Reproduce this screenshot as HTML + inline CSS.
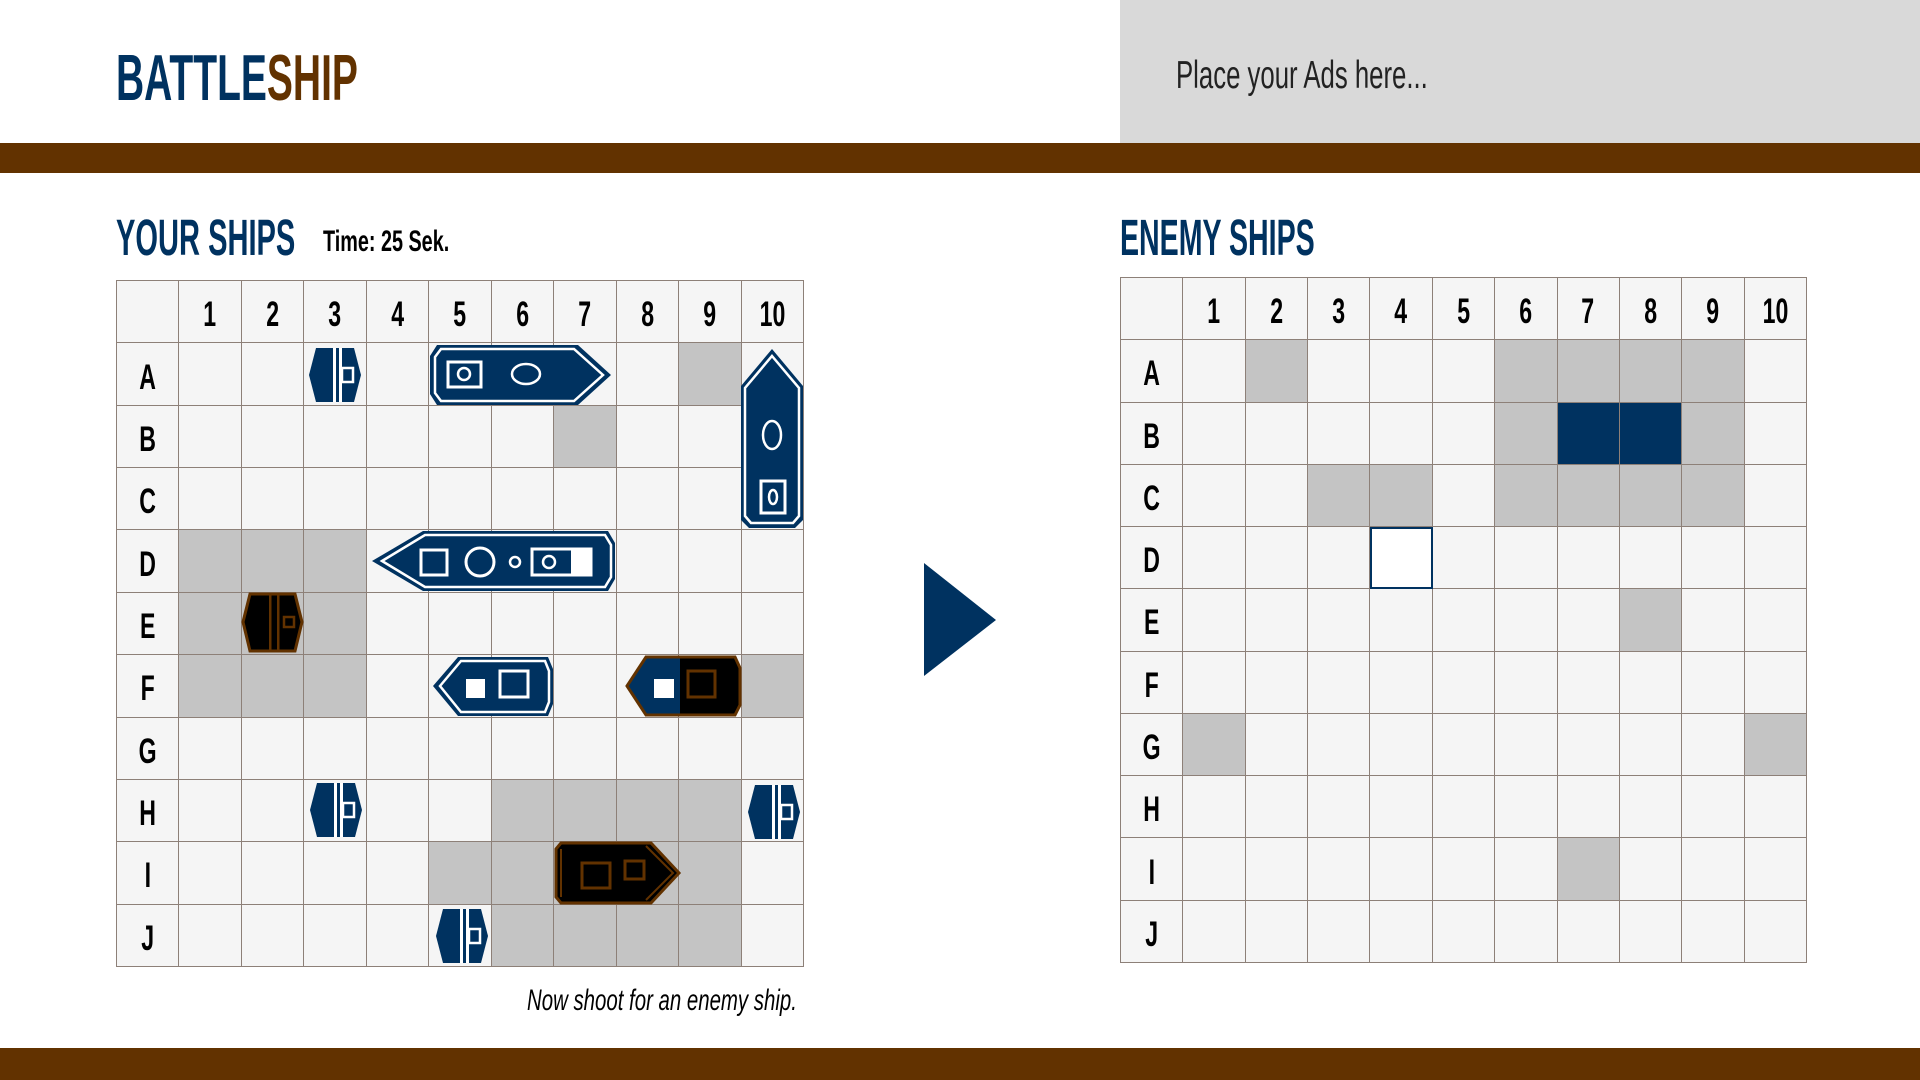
<!DOCTYPE html>
<html><head><meta charset="utf-8"><style>
*{margin:0;padding:0;box-sizing:border-box}
body{width:1920px;height:1080px;background:#fff;position:relative;overflow:hidden;font-family:"Liberation Sans",sans-serif}
.abs{position:absolute;white-space:nowrap}
.ad{left:1120px;top:0;width:800px;height:143px;background:#d9d9d9}
.bar{left:0;width:1920px;background:#623200}
.grid{position:absolute;display:grid;grid-template-columns:repeat(11,1fr);grid-template-rows:repeat(11,1fr);border-left:1px solid #8d8078;border-top:1px solid #8d8078}
.grid div{background:#f5f5f5;border-right:1px solid #8d8078;border-bottom:1px solid #8d8078;display:flex;align-items:center;justify-content:center;font-weight:bold;font-size:35px;color:#000;padding-top:7px}
.grid div span{display:inline-block;transform:scaleX(.66)}
.grid div.g{background:#c4c4c4}
.grid div.n{background:#003260}
.grid div.o{outline:2px solid #003260;outline-offset:-2px;background:#fff}
</style></head><body>
<div class="abs" style="left:116px;top:45px;font-size:65px;line-height:65px;font-weight:bold;transform:scaleX(.6);transform-origin:left;color:#003260">BATTLE<span style="color:#623200">SHIP</span></div>
<div class="abs ad"></div>
<div class="abs" style="left:1176px;top:56px;font-size:39px;line-height:39px;transform:scaleX(.66);transform-origin:left;color:#222">Place your Ads here...</div>
<div class="abs bar" style="top:143px;height:30px"></div>
<div class="abs bar" style="top:1048px;height:32px"></div>
<div class="abs" style="left:116px;top:212px;font-size:51px;line-height:51px;font-weight:bold;transform:scaleX(.57);transform-origin:left;color:#003260">YOUR SHIPS</div>
<div class="abs" style="left:323px;top:227px;font-size:30px;line-height:30px;font-weight:bold;transform:scaleX(.66);transform-origin:left;color:#000">Time: 25 Sek.</div>
<div class="abs" style="left:1120px;top:212px;font-size:51px;line-height:51px;font-weight:bold;transform:scaleX(.56);transform-origin:left;color:#003260">ENEMY SHIPS</div>
<div class="abs" style="right:1123px;top:986px;font-size:30px;line-height:30px;font-style:italic;transform:scaleX(.68);transform-origin:right;color:#000">Now shoot for an enemy ship.</div>

<div class="grid" style="left:116px;top:280px;width:688px;height:687px">
<div></div><div><span>1</span></div><div><span>2</span></div><div><span>3</span></div><div><span>4</span></div><div><span>5</span></div><div><span>6</span></div><div><span>7</span></div><div><span>8</span></div><div><span>9</span></div><div><span>10</span></div>
<div><span>A</span></div><div></div><div></div><div></div><div></div><div></div><div></div><div></div><div></div><div class="g"></div><div></div>
<div><span>B</span></div><div></div><div></div><div></div><div></div><div></div><div></div><div class="g"></div><div></div><div></div><div></div>
<div><span>C</span></div><div></div><div></div><div></div><div></div><div></div><div></div><div></div><div></div><div></div><div></div>
<div><span>D</span></div><div class="g"></div><div class="g"></div><div class="g"></div><div></div><div></div><div></div><div></div><div></div><div></div><div></div>
<div><span>E</span></div><div class="g"></div><div class="g"></div><div class="g"></div><div></div><div></div><div></div><div></div><div></div><div></div><div></div>
<div><span>F</span></div><div class="g"></div><div class="g"></div><div class="g"></div><div></div><div></div><div></div><div></div><div></div><div></div><div class="g"></div>
<div><span>G</span></div><div></div><div></div><div></div><div></div><div></div><div></div><div></div><div></div><div></div><div></div>
<div><span>H</span></div><div></div><div></div><div></div><div></div><div></div><div class="g"></div><div class="g"></div><div class="g"></div><div class="g"></div><div></div>
<div><span>I</span></div><div></div><div></div><div></div><div></div><div class="g"></div><div class="g"></div><div class="g"></div><div class="g"></div><div class="g"></div><div></div>
<div><span>J</span></div><div></div><div></div><div></div><div></div><div></div><div class="g"></div><div class="g"></div><div class="g"></div><div class="g"></div><div></div>
</div>

<div class="grid" style="left:1120px;top:277px;width:687px;height:686px">
<div></div><div><span>1</span></div><div><span>2</span></div><div><span>3</span></div><div><span>4</span></div><div><span>5</span></div><div><span>6</span></div><div><span>7</span></div><div><span>8</span></div><div><span>9</span></div><div><span>10</span></div>
<div><span>A</span></div><div></div><div class="g"></div><div></div><div></div><div></div><div class="g"></div><div class="g"></div><div class="g"></div><div class="g"></div><div></div>
<div><span>B</span></div><div></div><div></div><div></div><div></div><div></div><div class="g"></div><div class="n"></div><div class="n"></div><div class="g"></div><div></div>
<div><span>C</span></div><div></div><div></div><div class="g"></div><div class="g"></div><div></div><div class="g"></div><div class="g"></div><div class="g"></div><div class="g"></div><div></div>
<div><span>D</span></div><div></div><div></div><div></div><div class="o"></div><div></div><div></div><div></div><div></div><div></div><div></div>
<div><span>E</span></div><div></div><div></div><div></div><div></div><div></div><div></div><div></div><div class="g"></div><div></div><div></div>
<div><span>F</span></div><div></div><div></div><div></div><div></div><div></div><div></div><div></div><div></div><div></div><div></div>
<div><span>G</span></div><div class="g"></div><div></div><div></div><div></div><div></div><div></div><div></div><div></div><div></div><div class="g"></div>
<div><span>H</span></div><div></div><div></div><div></div><div></div><div></div><div></div><div></div><div></div><div></div><div></div>
<div><span>I</span></div><div></div><div></div><div></div><div></div><div></div><div></div><div class="g"></div><div></div><div></div><div></div>
<div><span>J</span></div><div></div><div></div><div></div><div></div><div></div><div></div><div></div><div></div><div></div><div></div>
</div>

<svg class="abs" style="left:0;top:0" width="1920" height="1080" viewBox="0 0 1920 1080">
<defs>
<g id="hex">
<polygon points="0,27 7,0 45,0 52,27 45,54 7,54" fill="#003260"/>
<rect x="24" y="0" width="3" height="54" fill="#fff"/>
<rect x="30" y="0" width="3" height="54" fill="#fff"/>
<rect x="33" y="20" width="11" height="14" fill="none" stroke="#fff" stroke-width="2.5"/>
</g>
</defs>
<polygon points="924,563 996,620 924,676" fill="#003260"/>
<use href="#hex" x="309" y="348"/>
<use href="#hex" x="310" y="783"/>
<use href="#hex" x="748" y="785"/>
<use href="#hex" x="436" y="909"/>
<polygon points="430,356 437,345 578,345 611,375 578,405 437,405 430,394" fill="#003260"/>
<polygon points="435,357 441,349 574,349 603,375 574,401 441,401 435,393" fill="#003260" stroke="#fff" stroke-width="2.5"/>
<rect x="448" y="362" width="33" height="25" fill="none" stroke="#fff" stroke-width="3"/>
<circle cx="464" cy="374" r="6" fill="none" stroke="#fff" stroke-width="2.5"/>
<ellipse cx="526" cy="374" rx="14" ry="10" fill="none" stroke="#fff" stroke-width="2.5"/>
<polygon points="772,349 803,386 803,520 795,528 749,528 741,520 741,386" fill="#003260"/>
<polygon points="772,356 799,388 799,516 793,523 751,523 745,516 745,388" fill="#003260" stroke="#fff" stroke-width="2.5"/>
<ellipse cx="772" cy="435" rx="9" ry="14" fill="none" stroke="#fff" stroke-width="2.5"/>
<rect x="761" y="481" width="24" height="32" fill="none" stroke="#fff" stroke-width="3"/>
<ellipse cx="773" cy="497" rx="4" ry="7" fill="none" stroke="#fff" stroke-width="2.5"/>
<polygon points="372,561 423,531 608,531 615,543 615,579 608,591 423,591" fill="#003260"/>
<polygon points="382,561 425,535 605,535 611,545 611,577 605,587 425,587" fill="#003260" stroke="#fff" stroke-width="2.5"/>
<rect x="421" y="550" width="26" height="25" fill="none" stroke="#fff" stroke-width="3"/>
<circle cx="480" cy="562" r="14" fill="none" stroke="#fff" stroke-width="3"/>
<circle cx="515" cy="562" r="5" fill="none" stroke="#fff" stroke-width="2.5"/>
<rect x="571" y="549" width="20" height="26" fill="#fff"/>
<rect x="532" y="549" width="59" height="26" fill="none" stroke="#fff" stroke-width="3"/>
<circle cx="549" cy="562" r="6" fill="none" stroke="#fff" stroke-width="2.5"/>
<polygon points="243,622 250,594 295,594 302,622 295,651 250,651" fill="#000" stroke="#623200" stroke-width="3"/>
<rect x="269" y="594" width="2.5" height="57" fill="#623200"/>
<rect x="277" y="594" width="2.5" height="57" fill="#623200"/>
<rect x="284" y="617" width="10" height="10" fill="none" stroke="#623200" stroke-width="2.5"/>
<polygon points="433,686 458,657 548,657 553,669 553,704 548,716 458,716" fill="#003260"/>
<polygon points="440,686 461,661 545,661 549,671 549,702 545,712 461,712" fill="#003260" stroke="#fff" stroke-width="2.5"/>
<rect x="466" y="679" width="19" height="19" fill="#fff"/>
<rect x="500" y="671" width="28" height="26" fill="none" stroke="#fff" stroke-width="3"/>
<polygon points="627,686 646,657 735,657 740,668 740,705 735,715 646,715" fill="#003260"/>
<path d="M680,657 L735,657 740,668 740,705 735,715 680,715 Z" fill="#000"/>
<polygon points="627,686 646,657 735,657 740,668 740,705 735,715 646,715" fill="none" stroke="#623200" stroke-width="3"/>
<rect x="654" y="679" width="20" height="19" fill="#fff"/>
<rect x="688" y="671" width="27" height="26" fill="none" stroke="#623200" stroke-width="3"/>
<polygon points="556,849 561,843 651,843 679,873 651,903 561,903 556,897" fill="#000" stroke="#623200" stroke-width="3"/>
<polyline points="646,846 673,873 646,900" fill="none" stroke="#623200" stroke-width="2"/>
<line x1="561" y1="849" x2="561" y2="897" stroke="#623200" stroke-width="2"/>
<rect x="582" y="863" width="28" height="25" fill="none" stroke="#623200" stroke-width="3"/>
<rect x="625" y="861" width="19" height="18" fill="none" stroke="#623200" stroke-width="3"/>
</svg>
</body></html>
